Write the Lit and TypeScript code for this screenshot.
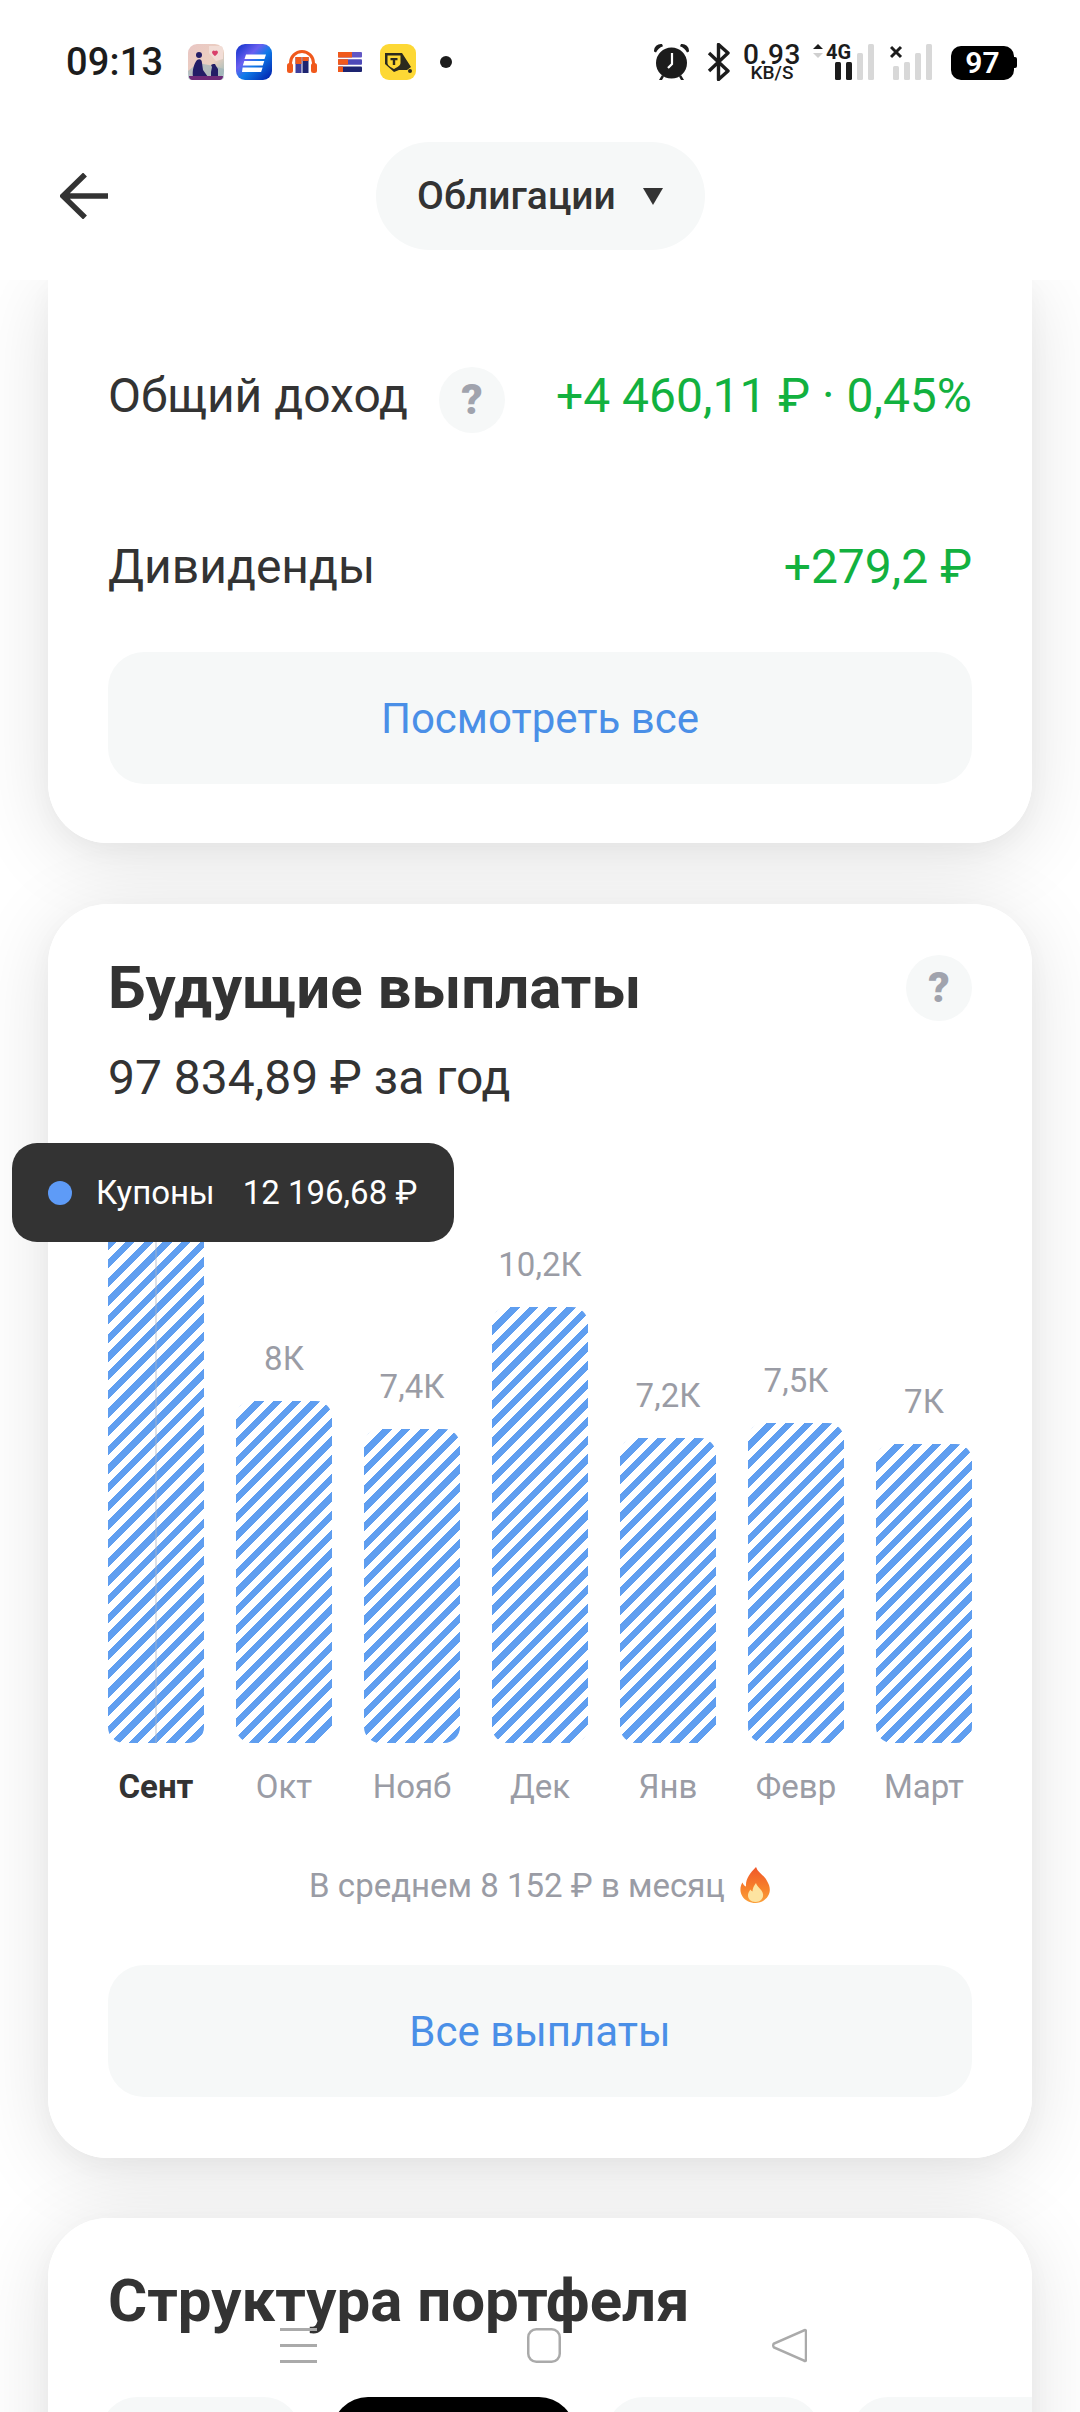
import { LitElement, css, html, svg } from 'lit';
import { customElement } from 'lit/decorators.js';
import { classMap } from 'lit/directives/class-map.js';

const BARS = [
  { month: 'Сент', label: '', height: 521, active: true },
  { month: 'Окт', label: '8К', height: 342, active: false },
  { month: 'Нояб', label: '7,4К', height: 314, active: false },
  { month: 'Дек', label: '10,2К', height: 436, active: false },
  { month: 'Янв', label: '7,2К', height: 305, active: false },
  { month: 'Февр', label: '7,5К', height: 320, active: false },
  { month: 'Март', label: '7К', height: 299, active: false },
];

const appIcons = html`
  <svg class="app a1" width="36" height="36" viewBox="0 0 36 36">
    <defs>
      <linearGradient id="a1" x1="0" y1="0" x2="1" y2="1">
        <stop offset="0" stop-color="#e9c6c4" /><stop offset=".6" stop-color="#ecd0c0" /><stop offset="1" stop-color="#8fb7b8" />
      </linearGradient>
    </defs>
    <rect width="36" height="36" rx="9" fill="url(#a1)" />
    <path d="M0 27l10-8 16 3 10 3v7a4 4 0 0 1-4 4H4a4 4 0 0 1-4-4z" fill="#9fb5bb" opacity=".7" />
    <path d="M21 2h11a3 3 0 0 1 3 3v10l-7 2-7-8z" fill="#f2ddd6" />
    <path d="M24 8a2 2 0 0 1 3-1 2 2 0 0 1 3 1c0 2-3 4-3 4s-3-2-3-4z" fill="#d9406a" />
    <circle cx="11" cy="11" r="3" fill="#231d66" />
    <path d="M5 33c-1-7 1-13 4-17 3-2 5 0 5 3l1 7 5 7z" fill="#231d66" />
    <path d="M23 33v-5l1-5-1-2 2-1h2l1 2 2 3v8z" fill="#231d66" />
    <path d="M1 32h34a4 4 0 0 1-3 4H4a4 4 0 0 1-3-4z" fill="#6c2a77" />
  </svg>
  <svg class="app a2" width="36" height="36" viewBox="0 0 36 36">
    <defs>
      <linearGradient id="a2" x1="0" y1="0" x2="1" y2="1">
        <stop offset="0" stop-color="#0a2fc8" /><stop offset=".35" stop-color="#6a5ff0" />
        <stop offset=".55" stop-color="#0f7be8" /><stop offset="1" stop-color="#0019a8" />
      </linearGradient>
    </defs>
    <rect width="36" height="36" rx="9" fill="url(#a2)" />
    <path d="M10 10.500h20l-1.500 4.500h-20zM8.300 17h20l-1.500 4.500h-20zM6.600 23.500h20l-1.500 4.500H6z" fill="#fff" />
  </svg>
  <svg class="app a3" width="30" height="24" viewBox="0 0 30 24">
    <path d="M3.500 16V13a11.500 11.500 0 0 1 23 0v3" fill="none" stroke="#f0591c" stroke-width="3" />
    <rect x="0" y="13" width="6" height="10" rx="2.500" fill="#f0591c" />
    <rect x="24" y="13" width="6" height="10" rx="2.500" fill="#f0591c" />
    <rect x="8.500" y="7" width="6" height="16" fill="#3e3f9e" />
    <rect x="15.500" y="7" width="6" height="16" fill="#1d2470" />
    <rect x="8.500" y="7" width="6" height="7" fill="#f0591c" />
    <rect x="15.500" y="7" width="6" height="4" fill="#f0591c" />
  </svg>
  <svg class="app a4" width="24" height="20" viewBox="0 0 24 20">
    <rect y="0" width="24" height="5.500" rx="1" fill="#6257c4" />
    <rect y="0" width="14" height="5.500" fill="#f0591c" />
    <rect y="7.200" width="24" height="5.500" rx="1" fill="#4d49b8" />
    <rect y="7.200" width="10" height="5.500" fill="#f0591c" />
    <rect y="14.500" width="24" height="5.500" rx="1" fill="#1d2470" />
    <rect y="14.500" width="5" height="5.500" fill="#f0591c" />
  </svg>
  <svg class="app a5" width="36" height="36" viewBox="0 0 36 36">
    <rect width="36" height="36" rx="9" fill="#fdd835" />
    <path d="M5 9h17l9 14-4 3-8 0-5 2-9-8z" fill="#2b2a1e" />
    <path d="M7.500 11.500h13v7.500c0 3-4 4.500-6.500 6-2.500-1.500-6.500-3-6.500-6z" fill="#fdd835" />
    <path d="M10.500 14h7v2.200h-2.300V21h-2.400v-4.800h-2.300z" fill="#2b2a1e" />
    <circle cx="30" cy="27" r="2" fill="#2b2a1e" />
  </svg>
`;

const alarmIcon = html`
  <svg class="ico alarm" width="37" height="38" viewBox="0 0 37 38" fill="#1c1c1c">
    <circle cx="18.500" cy="20" r="15.500" />
    <path d="M1 8.500A7 7 0 0 1 9 1l1 2.200A12 12 0 0 0 3 9.500zM36 8.500A7 7 0 0 0 28 1l-1 2.200a12 12 0 0 1 7 6.300z" />
    <path d="M6 37l3-5 2 1.500-2 3.500zM31 37l-3-5-2 1.500 2 3.500z" />
    <path d="M19 10v11l-4 4" fill="none" stroke="#fff" stroke-width="2.200" />
  </svg>
`;

const btIcon = html`
  <svg class="ico bt" width="23" height="38" viewBox="0 0 23 38" fill="none">
    <path d="M2 10l19 18-9.500 8.500V1.500L21 10 2 28" stroke="#1c1c1c" stroke-width="3.400" stroke-linejoin="round" />
  </svg>
`;

const signalBars = (bars: number[][], on: number) =>
  bars.map(
    ([x, h], i) => svg`<rect x=${x} y=${36 - h} width="6" height=${h} rx="1.500" fill=${i < on ? '#1c1c1c' : '#d8d8d8'} />`
  );

const fireIcon = html`
  <svg class="fire" width="31" height="36" viewBox="0 0 31 36">
    <defs>
      <linearGradient id="fl" x1="0" y1="0" x2="0" y2="1">
        <stop offset="0" stop-color="#f0562a" /><stop offset=".6" stop-color="#f7822b" /><stop offset="1" stop-color="#fba03a" />
      </linearGradient>
    </defs>
    <path d="M16 0c2 6 8 8 11 14 3 5 4 10 1 15-2.500 4-7 7-12.500 7S5 33.500 2.500 29.500c-3-5-2.500-10 0-14 .8 2 1.800 3.500 3.500 4C5.500 12 10 6 16 0z" fill="url(#fl)" />
    <path d="M16 16c1 4 6 6 7 11 .8 4.500-3 8-7.500 8S7.500 32 8 27.500c.4-2.500 1.500-3.500 2.500-5 .5 1 1 1.500 2 2 0-3 1.500-6 3.500-8.500z" fill="#fde3a0" />
  </svg>
`;

@customElement('app-root')
export class AppRoot extends LitElement {
  static styles = css`
    :host {
      display: block;
      position: relative;
      width: 1080px;
      height: 2412px;
      overflow: hidden;
      background: #fff;
      font-family: Roboto, 'Noto Sans', sans-serif;
      color: #333;
    }

    /* top */
    .top {
      position: relative;
      z-index: 2;
      height: 280px;
      background: #fff;
    }
    .status {
      display: flex;
      align-items: flex-start;
      height: 142px;
      padding: 44px 0 0 66px;
      box-sizing: border-box;
    }
    .time {
      font-size: 38px;
      font-weight: 500;
      line-height: 36px;
      color: #1c1c1c;
      letter-spacing: 0.2px;
      width: 96px;
    }
    .app, .ico {
      flex: none;
      display: block;
    }
    .a1 { margin-left: 26px; }
    .a2 { margin-left: 12px; }
    .a3 { margin: 6px 0 0 15px; }
    .a4 { margin: 8px 0 0 21px; }
    .a5 { margin-left: 18px; }
    .alarm { margin: -1px 0 0 201px; }
    .bt { margin: -1px 0 0 17px; }
    .dot {
      flex: none;
      width: 12px;
      height: 12px;
      margin: 12px 0 0 24px;
      border-radius: 50%;
      background: #1c1c1c;
    }
    .speed {
      flex: none;
      width: 58px;
      margin-left: 13px;
      text-align: center;
      color: #1c1c1c;
      font-weight: 500;
    }
    .speed b {
      display: block;
      font-size: 28px;
      font-weight: 500;
      letter-spacing: 0.6px;
      line-height: 21px;
    }
    .speed span {
      display: block;
      font-size: 19px;
      line-height: 15px;
    }
    .net {
      flex: none;
      margin-left: 12px;
      overflow: visible;
    }
    .sim2 {
      flex: none;
      margin-left: 15px;
    }
    .battery {
      flex: none;
      display: flex;
      margin: 2px 0 0 19px;
    }
    .battery span {
      width: 63px;
      height: 34px;
      border-radius: 10px;
      background: #000;
      color: #fff;
      font-size: 30px;
      font-weight: 600;
      line-height: 34px;
      text-align: center;
    }
    .battery i {
      width: 3px;
      height: 11px;
      margin-top: 11px;
      background: #000;
      border-radius: 0 2px 2px 0;
    }
    .toolbar {
      position: relative;
      display: flex;
      justify-content: center;
    }
    .back {
      position: absolute;
      left: 60px;
      top: 31px;
    }
    .pill {
      display: flex;
      align-items: center;
      justify-content: center;
      gap: 27px;
      width: 329px;
      height: 108px;
      border-radius: 54px;
      background: #f6f8f8;
      font-size: 39px;
      font-weight: 500;
      color: #333;
    }
    .tri {
      width: 0;
      height: 0;
      border-left: 10px solid transparent;
      border-right: 10px solid transparent;
      border-top: 17px solid #333;
    }

    /* cards */
    .feed {
      isolation: isolate;
      display: flex;
      flex-direction: column;
      gap: 61px;
      padding: 0 48px;
    }
    .card {
      position: relative;
      background: #fff;
      border-radius: 60px;
      padding: 0 60px;
    }
    .card::before {
      content: '';
      position: absolute;
      inset: 0;
      z-index: -1;
      border-radius: inherit;
      box-shadow: 0 12px 80px rgba(0, 0, 0, 0.12), 0 8px 24px rgba(0, 0, 0, 0.03);
    }
    .first {
      border-radius: 0 0 60px 60px;
      padding-top: 30px;
      padding-bottom: 59px;
    }
    .row {
      display: flex;
      align-items: center;
      height: 170px;
      font-size: 48px;
    }
    .row + .row {
      height: 172px;
    }
    .row .val {
      margin-left: auto;
      color: #12b13f;
    }
    .q {
      flex: none;
      width: 66px;
      height: 66px;
      border-radius: 50%;
      background: #f6f8f8;
      color: #a0a3ad;
      font-size: 42px;
      font-weight: 900;
      line-height: 66px;
      text-align: center;
    }
    .row .q {
      margin: 10px 0 0 31px;
    }
    .btn {
      display: flex;
      align-items: center;
      justify-content: center;
      height: 132px;
      border-radius: 36px;
      background: #f6f8f8;
      color: #4a8fe7;
      font-size: 42px;
    }

    .second {
      padding-top: 51px;
      padding-bottom: 61px;
    }
    .head {
      display: flex;
      align-items: center;
      justify-content: space-between;
      height: 66px;
    }
    h2 {
      margin: 0;
      font-size: 60px;
      font-weight: 700;
      line-height: 66px;
      color: #333;
    }
    .sub {
      font-size: 48px;
      line-height: 60px;
      margin-top: 27px;
    }
    .chart {
      display: flex;
      align-items: flex-end;
      gap: 32px;
      height: 635px;
    }
    .col {
      flex: 1;
      display: flex;
      flex-direction: column;
      align-items: center;
    }
    .col .lbl {
      font-size: 33px;
      line-height: 40px;
      margin-bottom: 22px;
      color: #9a9ca5;
      white-space: nowrap;
    }
    .bar {
      position: relative;
      align-self: stretch;
      border-radius: 16px;
      background: repeating-linear-gradient(135deg, #5f9ef0 0 6.800px, #fff 6.800px 13.200px);
    }
    .bar.active::after {
      content: '';
      position: absolute;
      top: 0;
      bottom: 0;
      left: 47px;
      width: 2px;
      background: rgba(170, 180, 200, 0.4);
    }
    .months {
      display: flex;
      gap: 32px;
      margin-top: 24px;
    }
    .months span {
      flex: 1;
      text-align: center;
      font-size: 33px;
      line-height: 40px;
      color: #9a9ca5;
      white-space: nowrap;
    }
    .months span.active {
      color: #333;
      font-weight: 700;
    }
    .avg {
      display: flex;
      align-items: center;
      justify-content: center;
      gap: 15px;
      height: 44px;
      margin: 56px 0 58px;
      font-size: 33px;
      color: #9a9ca5;
    }
    .fire {
      flex: none;
    }

    .third {
      margin-top: -1px;
      padding-top: 50px;
      height: 400px;
    }
    .chips {
      display: flex;
      gap: 32px;
      margin: 63px -60px 0 -7px;
      overflow: hidden;
    }
    .chip {
      flex: none;
      height: 120px;
      border-radius: 36px;
      background: #f6f8f8;
    }
    .chip.on {
      background: #000;
    }
    .w1 { width: 199px; }
    .w2 { width: 243px; }
    .w3 { width: 213px; }
    .w4 { width: 240px; }

    /* gesture bar sits over the page */
    .nav {
      position: absolute;
      left: 280px;
      top: 2328px;
      display: flex;
      gap: 210px;
    }
    .burger {
      display: flex;
      flex-direction: column;
      justify-content: space-between;
      width: 37px;
      height: 35px;
    }
    .burger i {
      height: 3px;
      background: #aaa;
    }

    /* tooltip */
    .tip {
      position: absolute;
      left: 12px;
      top: 1143px;
      z-index: 3;
      display: flex;
      align-items: center;
      width: 442px;
      height: 99px;
      box-sizing: border-box;
      padding-left: 36px;
      border-radius: 25px;
      background: #333;
      color: #fff;
      font-size: 33px;
    }
    .tip i {
      width: 24px;
      height: 24px;
      border-radius: 50%;
      background: #5e9bf7;
      margin-right: 24px;
    }
    .tip b {
      font-weight: 400;
      margin-left: 28px;
    }
  `;

  render() {
    return html`
      <div class="top">
        <div class="status">
          <div class="time">09:13</div>
          ${appIcons}
          <div class="dot"></div>
          ${alarmIcon} ${btIcon}
          <div class="speed"><b>0.93</b><span>KB/S</span></div>
          <svg class="net" width="62" height="36" viewBox="0 0 62 36">
            <path d="M5 0l5 5H0z" fill="#1c1c1c" />
            <path d="M5 14l5-5H0z" fill="#cfcfcf" />
            <text x="13" y="15" font-size="20" font-weight="700" font-family="Roboto" fill="#1c1c1c">4G</text>
            ${signalBars([[22, 18], [33, 18], [44, 27], [55, 36]], 2)}
          </svg>
          <svg class="sim2" width="42" height="36" viewBox="0 0 42 36">
            <path d="M1 3l10 10M11 3L1 13" stroke="#1c1c1c" stroke-width="3" />
            ${signalBars([[3, 14], [14, 18], [25, 27], [36, 36]], 0)}
          </svg>
          <div class="battery"><span>97</span><i></i></div>
        </div>
        <div class="toolbar">
          <svg class="back" width="48" height="46" viewBox="0 0 48 46" fill="none">
            <path d="M48 23H3M25 1.500L3 23l22 21.500" stroke="#333" stroke-width="5.500" />
          </svg>
          <div class="pill">Облигации <span class="tri"></span></div>
        </div>
      </div>

      <div class="feed">
        <section class="card first">
          <div class="row">
            <span>Общий доход</span><span class="q">?</span>
            <span class="val">+4 460,11 ₽ · 0,45%</span>
          </div>
          <div class="row">
            <span>Дивиденды</span>
            <span class="val">+279,2 ₽</span>
          </div>
          <div class="btn">Посмотреть все</div>
        </section>

        <section class="card second">
          <div class="head">
            <h2>Будущие выплаты</h2>
            <span class="q">?</span>
          </div>
          <div class="sub">97 834,89 ₽ за год</div>
          <div class="chart">
            ${BARS.map(
              (b) => html`
                <div class="col">
                  <span class="lbl">${b.label}</span>
                  <div class=${classMap({ bar: true, active: b.active })} style="height:${b.height}px"></div>
                </div>
              `
            )}
          </div>
          <div class="months">
            ${BARS.map((b) => html`<span class=${classMap({ active: b.active })}>${b.month}</span>`)}
          </div>
          <div class="avg"><span>В среднем 8 152 ₽ в месяц</span>${fireIcon}</div>
          <div class="btn">Все выплаты</div>
        </section>

        <section class="card third">
          <h2>Структура портфеля</h2>
          <div class="chips">
            <div class="chip w1"></div>
            <div class="chip on w2"></div>
            <div class="chip w3"></div>
            <div class="chip w4"></div>
          </div>
        </section>
      </div>

      <div class="tip"><i></i><span>Купоны</span><b>12 196,68 ₽</b></div>

      <div class="nav">
        <div class="burger"><i></i><i></i><i></i></div>
        <svg width="34" height="35" viewBox="0 0 34 35" fill="none">
          <rect x="1.250" y="1.250" width="31.500" height="32.500" rx="8" stroke="#aaa" stroke-width="2.500" />
        </svg>
        <svg width="36" height="35" viewBox="0 0 36 35" fill="none">
          <path d="M33 2.500c1-1 2-.5 2 1v28c0 1.500-1 2-2 1L3 19.500c-1-1-1-3 0-4z" stroke="#aaa" stroke-width="2.500" />
        </svg>
      </div>
    `;
  }
}
